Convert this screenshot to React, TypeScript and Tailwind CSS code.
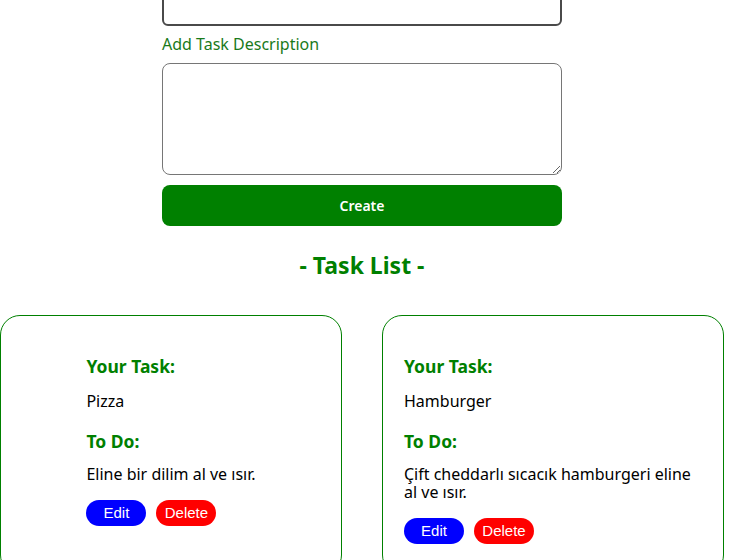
import React from "react";

interface Task {
    title: string;
    description: string;
}

const tasks: Task[] = [
    { title: "Pizza", description: "Eline bir dilim al ve ısır." },
    { title: "Hamburger", description: "Çift cheddarlı sıcacık hamburgeri eline al ve ısır." },
];

const TaskCard: React.FC<{ task: Task }> = ({ task }) => {
    return (
        <div className="flex justify-center border border-[#008000] rounded-[20px] px-[21px] pt-[39px] pb-[30px]">
            <div className="max-w-[300px]">
                <h3 className="text-[17.5px] font-bold text-[#008000] leading-[22px]">Your Task:</h3>
                <p className="mt-[14px] text-[16px] text-black leading-[20px]">{task.title}</p>
                <h3 className="mt-[19px] text-[17.5px] font-bold text-[#008000] leading-[22px]">To Do:</h3>
                <p className="mt-[13px] text-[16px] text-black leading-[18px]">{task.description}</p>
                <div className="flex gap-[10px] mt-[17px]">
                    <button className="w-[60px] h-[26px] rounded-full bg-[#0000ff] text-white text-[15px] font-['Liberation_Sans',sans-serif]">
                        Edit
                    </button>
                    <button className="w-[60px] h-[26px] rounded-full bg-[#ff0000] text-white text-[15px] font-['Liberation_Sans',sans-serif]">
                        Delete
                    </button>
                </div>
            </div>
        </div>
    );
};

export default function App() {
    return (
        <div className="w-[739px] h-[560px] overflow-hidden bg-white font-['Noto_Sans',sans-serif]">
            <div className="w-[724px]">
                <div className="w-[400px] mx-auto -mt-[14px] flex flex-col">
                    <input className="h-[40px] border-2 border-[#4a4a4a] rounded-[6px] outline-none" />
                    <label className="mt-[8px] text-[16px] text-[#1a7a1a] leading-[20px]">Add Task Description</label>
                    <textarea className="mt-[9px] h-[112px] border border-[#767676] rounded-[8px] outline-none" />
                    <button className="mt-[10px] h-[41px] rounded-[8px] bg-[#008000] text-white text-[14px] font-semibold">
                        Create
                    </button>
                </div>
                <h2 className="mt-[25px] text-center text-[23px] font-bold text-[#008000] leading-[28px]">- Task List -</h2>
                <div className="mt-[36px] grid grid-cols-[342px_342px] gap-[40px]">
                    {tasks.map((t) => (
                        <TaskCard key={t.title} task={t} />
                    ))}
                </div>
            </div>
        </div>
    );
}
